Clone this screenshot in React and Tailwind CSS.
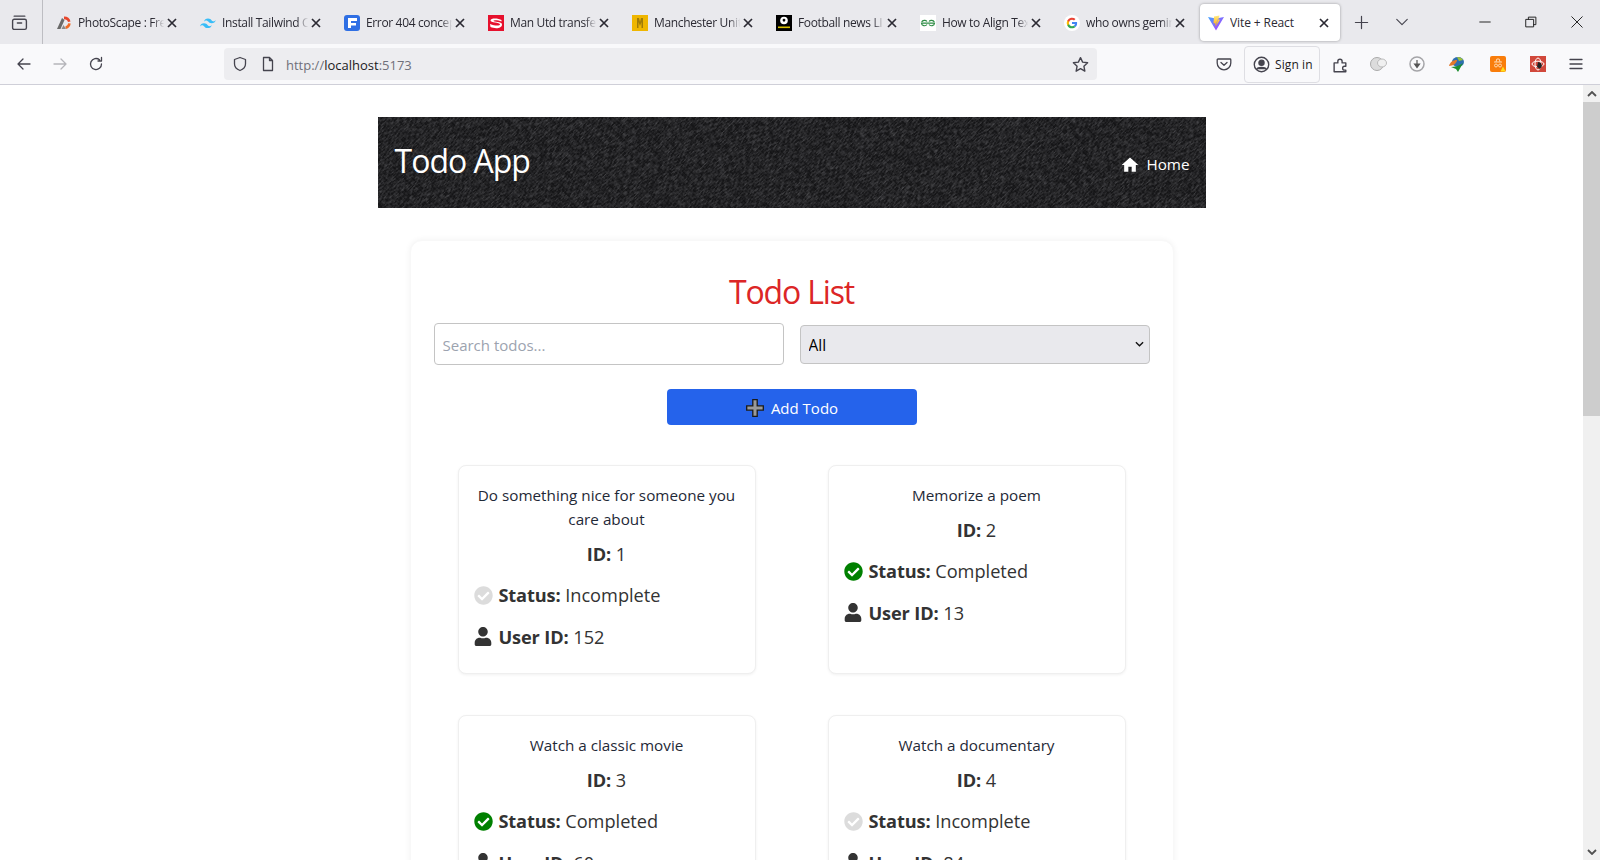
import React from "react";
import { FaCheckCircle, FaUser } from "react-icons/fa";
import { MdHome } from "react-icons/md";

const sans = "font-['Open_Sans','Noto_Sans',sans-serif]";

const Photo = () => (
  <svg viewBox="0 0 16 16" className="w-4 h-4 shrink-0"><path d="M1 14 L6 3 L8.500 5 L4.500 14Z" fill="#6a6a6a"/><path d="M8 1.500a6.500 6.500 0 0 1 6.500 5l-2.500.5A4 4 0 0 0 8 4.200Z" fill="#e8452c"/><path d="M14.700 8.500a6.500 6.500 0 0 1-4.700 5.500l-.8-2.300a4 4 0 0 0 3-3.400Z" fill="#f06a24"/><path d="M5.500 14l2-4 2.500 4Z" fill="#8a8a8a"/></svg>
);
const TailwindIcon = () => (
  <svg viewBox="0 0 16 16" className="w-4 h-4 shrink-0"><path fill="#38bdf8" d="M8 3.500c-2.100 0-3.500 1.100-4 3.200.8-1.100 1.700-1.500 2.700-1.200.6.200 1 .6 1.500 1.100.7.800 1.600 1.700 3.500 1.700 2.100 0 3.500-1.100 4-3.200-.8 1.100-1.700 1.500-2.700 1.200-.6-.2-1-.6-1.500-1.100C10.800 4.400 9.900 3.500 8 3.500ZM4 8.300c-2.100 0-3.500 1.100-4 3.200.8-1.100 1.700-1.500 2.700-1.200.6.200 1 .6 1.500 1.100.7.800 1.600 1.700 3.500 1.700 2.100 0 3.500-1.100 4-3.200-.8 1.100-1.700 1.500-2.700 1.200-.6-.2-1-.6-1.500-1.100C6.800 9.200 5.900 8.300 4 8.300Z"/></svg>
);
const Formspree = () => (
  <svg viewBox="0 0 16 16" className="w-4 h-4 shrink-0"><rect width="16" height="16" rx="3" fill="#2f6fe4"/><path d="M4 3h9v3H7v2h5v2.500H7V13H4Z" fill="#fff"/></svg>
);
const SIcon = () => (
  <svg viewBox="0 0 16 16" className="w-4 h-4 shrink-0"><rect width="16" height="16" fill="#e6102d"/><path d="M13.500 5C11 3.500 2.800 2.500 2.500 5.500 2.300 8 12 7 12 9.500c0 1.500-5 1.500-10-.5l.5 3c4 1.800 11.500 2 11.500-2.500C14 6 5.500 7.500 5.500 5.800c0-1 5-.8 8 .7Z" fill="#fff"/></svg>
);
const ManU = () => (
  <svg viewBox="0 0 16 16" className="w-4 h-4 shrink-0"><rect width="16" height="16" fill="#efb600"/><path d="M5 3h2l1 4 1-4h2v10H9.500V7L8 11 6.500 7v6H5Z" fill="#a07c08"/></svg>
);
const Football = () => (
  <svg viewBox="0 0 16 16" className="w-4 h-4 shrink-0"><rect width="16" height="16" fill="#000"/><circle cx="8" cy="5.500" r="3.800" fill="#fff"/><path d="M8 3.500l1.500 1.200-.6 1.800H7.100l-.6-1.800Z" fill="#000"/><rect x="2" y="11.500" width="12" height="1.600" fill="#d9c100"/></svg>
);
const Gfg = () => (
  <svg viewBox="0 0 16 16" className="w-4 h-4 shrink-0"><rect width="16" height="16" fill="#fff"/><g fill="none" stroke="#2f8d46" strokeWidth="1.200"><path d="M8 8.200H1.500a3 2.700 0 0 0 5.500 1.300M8 8.200h6.500a3 2.700 0 0 1-5.500 1.300"/><path d="M7 6.500A3 2.700 0 0 0 1.700 7M9 6.500A3 2.700 0 0 1 14.300 7"/></g></svg>
);
const Google = () => (
  <svg viewBox="0 0 16 16" className="w-4 h-4 shrink-0"><circle cx="8" cy="8" r="8" fill="#fff"/><path d="M13.100 8.200c0-.4 0-.7-.1-1.100H8v2h2.900a2.500 2.500 0 0 1-1.100 1.600l1.700 1.300c1-.9 1.600-2.200 1.600-3.800Z" fill="#4285f4"/><path d="M8 13.300c1.400 0 2.600-.5 3.500-1.300l-1.700-1.300c-.5.300-1.100.5-1.800.5-1.400 0-2.500-.9-2.900-2.200H3.300v1.400A5.300 5.300 0 0 0 8 13.300Z" fill="#34a853"/><path d="M5.100 9a3.200 3.200 0 0 1 0-2V5.600H3.300a5.300 5.300 0 0 0 0 4.800Z" fill="#fbbc05"/><path d="M8 4.800c.8 0 1.500.3 2 .8l1.500-1.500A5.300 5.300 0 0 0 3.300 5.600L5.100 7C5.500 5.700 6.600 4.800 8 4.800Z" fill="#ea4335"/></svg>
);
const Vite = () => (
  <svg viewBox="0 0 16 16" className="w-4 h-4 shrink-0"><defs><linearGradient id="va" x1="0" y1="0" x2="1" y2="1"><stop offset="0" stopColor="#41a5ff"/><stop offset="1" stopColor="#bd34fe"/></linearGradient><linearGradient id="vb" x1="0" y1="0" x2="0" y2="1"><stop offset="0" stopColor="#ffea83"/><stop offset="1" stopColor="#ffa800"/></linearGradient></defs><path d="M0 2l8 1.500L16 2 8 15.500Z" fill="url(#va)"/><path d="M11.500 .5L6 1.500l-.5 7 1.800-.4-.5 3.300Z M11.500 .5l-1 4.500 1.700-.4-4.900 7.500" fill="url(#vb)"/></svg>
);

const X = () => (
  <svg viewBox="0 0 10 10" className="w-[10px] h-[10px]"><path d="M1 1l8 8M9 1l-8 8" stroke="#2b2a33" strokeWidth="1.700" fill="none"/></svg>
);

const tabs = [
  [Photo, "PhotoScape : Fre"],
  [TailwindIcon, "Install Tailwind C"],
  [Formspree, "Error 404 concep"],
  [SIcon, "Man Utd transfe"],
  [ManU, "Manchester Unit"],
  [Football, "Football news LI"],
  [Gfg, "How to Align Tex"],
  [Google, "who owns gemin"],
];

const Tab = ({ Icon, label, active }) => (
  <div className="w-[144px] h-[44px] shrink-0 px-[2px] pt-[4px] pb-[3px]">
    <div className={`h-[37px] rounded-[4px] flex items-center pl-[8px] pr-[11px] ${active ? "bg-white shadow-[0_0_3px_rgba(0,0,0,0.35)]" : ""}`}>
      <Icon />
      <div className={`ml-[6px] w-[88px] pt-[1px] overflow-hidden whitespace-nowrap text-[12px] text-[#2b2a33] ${active ? "tracking-[-0.1px]" : "tracking-[-0.35px] [mask-image:linear-gradient(to_right,black_85%,transparent_98%)]"}`}>{label}</div>
      <div className="ml-auto flex"><X /></div>
    </div>
  </div>
);

const I = ({ children, cls = "w-4 h-4", stroke = "#45444e" }) => (
  <svg viewBox="0 0 16 16" className={cls} fill="none" stroke={stroke} strokeWidth="1.300" strokeLinecap="round" strokeLinejoin="round">{children}</svg>
);

const Slot = ({ w, children }) => (
  <div className={`flex items-center justify-center shrink-0 ${w}`}>{children}</div>
);

const todos = [
  { title: "Do something nice for someone you care about", id: 1, done: false, user: 152 },
  { title: "Memorize a poem", id: 2, done: true, user: 13 },
  { title: "Watch a classic movie", id: 3, done: true, user: 60 },
  { title: "Watch a documentary", id: 4, done: false, user: 84 },
];

const Card = ({ t }) => (
  <div className="h-[209px] rounded-[8px] border border-[#efefef] bg-white shadow-[0_1px_3px_rgba(0,0,0,0.06)] pt-[17px] px-[15px] text-[#333]">
    <p className="text-center text-[15.250px] leading-[24px] text-[#1f2937]">{t.title}</p>
    <p className="mt-[11px] text-center text-[18.200px] leading-[24px]"><b className="font-bold tracking-[-0.15px]">ID:</b> {t.id}</p>
    <div className="mt-[17px] flex items-center gap-[6px] text-[18.200px] leading-[25px]">
      <FaCheckCircle className={`w-[19px] h-[19px] shrink-0 ${t.done ? "text-[#008000]" : "text-[#dcdcdc]"}`} />
      <span><b className="font-bold tracking-[-0.15px]">Status:</b> {t.done ? "Completed" : "Incomplete"}</span>
    </div>
    <div className="mt-[17px] flex items-center gap-[7px] text-[18.200px] leading-[25px]">
      <FaUser className="w-[18px] h-[19px] shrink-0 text-[#333] -mt-[2px]" />
      <span><b className="font-bold tracking-[-0.15px]">User ID:</b> {t.user}</span>
    </div>
  </div>
);

export default function App() {
  return (
    <div className={`h-[860px] w-[1600px] overflow-hidden flex flex-col bg-white ${sans}`}>
      {/* tab strip */}
      <div className="h-[44px] shrink-0 bg-[#e9e9ed] flex">
        <div className="w-[43px] shrink-0 border-r border-[#bdbdc2] flex items-center justify-center pr-[3px]">
          <I cls="w-[17px] h-[17px]"><rect x="1.500" y="5" width="13" height="9.500" rx="1.500"/><path d="M3 2h10M6 8.500h4"/></I>
        </div>
        <div className="w-[3px] shrink-0" />
        {tabs.map(([Icon, label]) => <Tab key={label} Icon={Icon} label={label} />)}
        <Tab Icon={Vite} label="Vite + React" active />
        <Slot w="w-[38px]"><I cls="w-[15px] h-[15px]"><path d="M8 1.500v13M1.500 8h13"/></I></Slot>
        <Slot w="w-[43px]"><I cls="w-[14px] h-[14px]"><path d="M2 5l6 6 6-6"/></I></Slot>
        <div className="ml-auto flex">
          <Slot w="w-[46px]"><I cls="w-[12px] h-[12px]" stroke="#222"><path d="M1 8h14"/></I></Slot>
          <Slot w="w-[46px]"><I cls="w-[12px] h-[12px]" stroke="#222"><rect x="1.500" y="4.500" width="10" height="10"/><path d="M4.500 4.500v-3h10v10h-3"/></I></Slot>
          <Slot w="w-[46px]"><I cls="w-[12px] h-[12px]" stroke="#222"><path d="M1 1l14 14M15 1L1 15"/></I></Slot>
        </div>
      </div>
      {/* toolbar */}
      <div className="h-[41px] shrink-0 bg-[#f9f9fb] border-b border-[#cfcfd8] flex items-center pl-[6px]">
        <Slot w="w-[36px]"><I><path d="M14 8H2.500M7 3L2 8l5 5"/></I></Slot>
        <Slot w="w-[36px]"><I stroke="#b5b5ba"><path d="M2 8h11.500M9 3l5 5-5 5"/></I></Slot>
        <Slot w="w-[36px]"><I><path d="M13.500 8A5.500 5.500 0 1 1 11.500 3.800M13.500 1.500V5H10"/></I></Slot>
        <div className="ml-[110px] w-[873px] h-[32px] rounded-[4px] bg-[#ededf0] flex items-center pl-[8px] pr-[8px]">
          <I><path d="M8 1.500l5.500 2v4.500c0 3.500-2.800 5.500-5.500 6.500C5.300 13.500 2.500 11.500 2.500 8V3.500Z"/></I>
          <div className="ml-[12px]"><I><path d="M3.500 1.500h6l3 3v10h-9ZM9.500 1.500v3h3"/></I></div>
          <span className="ml-[10px] pt-[3px] text-[13px] text-[#70707a]">http://<span className="text-[#1c1b22]">localhost</span>:5173</span>
          <div className="ml-auto"><I cls="w-[17px] h-[17px]"><path d="M8 1.500l2 4.300 4.700.6-3.500 3.200.9 4.700L8 11.900 3.900 14.300l.9-4.700L1.300 6.400 6 5.800Z"/></I></div>
        </div>
        <div className="ml-[119px] w-[16px]"><I><path d="M2 3h12a.8.8 0 0 1 .8.8V7A6.800 6.800 0 0 1 1.200 7V3.800A.8.8 0 0 1 2 3ZM5 6.500l3 2.700 3-2.700"/></I></div>
        <div className="ml-[12px] w-[76px] h-[37px] rounded-[4px] border border-[#dedee3] flex items-center pl-[8px] gap-[5px]">
          <I cls="w-[17px] h-[17px]" ><circle cx="8" cy="8" r="6.800"/><circle cx="8" cy="6.300" r="2.400" fill="#45444e"/><path d="M3.500 12.500c1-2.200 8-2.200 9 0" fill="#45444e"/></I>
          <span className="pt-[1px] text-[12px] tracking-[0.1px] text-[#1c1b22] whitespace-nowrap">Sign in</span>
        </div>
        <div className="ml-[12px]"><I cls="w-[17px] h-[17px]"><path d="M2 6.500h3.500V5a2 2 0 0 1 4 0v1.500H13v3.200h-1.200a1.800 1.800 0 0 0 0 3.600H13v1.500H2Z"/></I></div>
        <div className="ml-[21px]"><svg viewBox="0 0 18 16" className="w-[18px] h-[16px]"><circle cx="7" cy="8" r="6.500" fill="#dcdcdc" stroke="#aaa" strokeWidth="1"/><ellipse cx="12" cy="7" rx="4.500" ry="4" fill="#f0f0f0" stroke="#bbb" strokeWidth="1"/></svg></div>
        <div className="ml-[21px]"><svg viewBox="0 0 16 16" className="w-4 h-4"><circle cx="8" cy="8" r="7" fill="none" stroke="#a5a5a8" strokeWidth="1.500"/><path d="M8 4v6M5.500 8L8 11.500 10.500 8Z" fill="#555" stroke="#555" strokeWidth="1.200"/></svg></div>
        <div className="ml-[23px]"><svg viewBox="0 0 18 16" className="w-[18px] h-[16px]"><ellipse cx="10" cy="6" rx="6" ry="5" fill="#2e6fb0"/><path d="M1 10c1-4 4-6 8-6 0 3-4 6-8 6Z" fill="#e2792b"/><path d="M9 1c3 0 5 1 6 3l-4 1Z" fill="#9fc23a"/><path d="M3 11c3 0 8-1 12-4l-5 9-2-3Z" fill="#1d8f2e"/></svg></div>
        <div className="ml-[24px]"><svg viewBox="0 0 16 16" className="w-4 h-4"><rect width="16" height="16" rx="2" fill="#f97d0b"/><path d="M4 6h8M6 6l.8-3h2.400l.8 3" stroke="#ffd9b0" strokeWidth="1" fill="none"/><circle cx="6" cy="9.500" r="1.500" fill="none" stroke="#ffd9b0"/><circle cx="10" cy="9.500" r="1.500" fill="none" stroke="#ffd9b0"/><path d="M10.500 15.500l2.500-5 2.500 5Z" fill="#ffe11a"/></svg></div>
        <div className="ml-[24px]"><svg viewBox="0 0 16 16" className="w-4 h-4"><rect width="16" height="16" fill="#d1483b"/><ellipse cx="8" cy="8" rx="6" ry="2.800" fill="none" stroke="#fff" strokeWidth="1"/><ellipse cx="8" cy="8" rx="3" ry="6" fill="none" stroke="#fff" strokeWidth="1"/><path d="M8 6l3 1 1 3-2 3-3-2Z" fill="#222"/></svg></div>
        <div className="ml-[22px]"><I><path d="M2 3.500h12M2 8h12M2 12.500h12"/></I></div>
      </div>
      {/* page */}
      <div className="flex-1 min-h-0 flex">
        <div className="flex-1 min-w-0 overflow-hidden">
          <div className="w-[828px] mx-auto mt-[32px]">
            <header className="relative h-[91px] overflow-hidden bg-[#131315] flex items-center justify-between pl-[17px] pr-[16px]">
              <svg className="absolute inset-0 w-full h-full" aria-hidden="true">
                <filter id="noise" x="0" y="0" width="100%" height="100%"><feTurbulence type="fractalNoise" baseFrequency="1.300 0.220" numOctaves="2" seed="11"/><feColorMatrix values="0 0 0 0 0.3  0 0 0 0 0.3  0 0 0 0 0.32  0.8 0 0 0 -0.3"/></filter>
                <pattern id="weave" width="2.800" height="2.800" patternUnits="userSpaceOnUse" patternTransform="rotate(45)"><rect width="2.800" height="1.400" fill="#fff" fillOpacity="0.035"/></pattern>
                <rect x="-500" y="-1000" width="2200" height="2200" filter="url(#noise)" transform="rotate(45)"/>
                <rect width="100%" height="100%" fill="url(#weave)"/>
              </svg>
              <h1 className="relative text-[32px] leading-[44px] text-white font-normal tracking-[-1px] -mt-[4px]">Todo App</h1>
              <a className="relative flex items-center gap-[6px] text-white text-[15.250px] mt-[4px]"><MdHome className="w-[20px] h-[20px]" />Home</a>
            </header>
            <main className="mt-[32px] mx-[32px] rounded-[12px] bg-white border border-[#f8f8f8] shadow-[0_0_6px_rgba(0,0,0,0.06)] px-[23px] pt-[29px] pb-[40px]">
              <h2 className="text-center text-[32px] leading-[44px] text-[#dc2626] font-normal tracking-[-1.150px]">Todo List</h2>
              <div className="mt-[9px] flex items-center gap-[16px]">
                <input readOnly placeholder="Search todos..." className="w-[350px] h-[42px] rounded-[4px] border border-[#c4c4c4] bg-white px-[8px] pt-[2px] text-[15px] outline-none placeholder:text-[#9ca3af]" />
                <div className="relative w-[350px] h-[39px]">
                  <select className="w-full h-full appearance-none rounded-[4px] border border-[#c4c4c4] bg-[#e9e9ed] px-[8px] pt-[3px] text-[15.500px] text-black outline-none"><option>All</option></select>
                  <svg viewBox="0 0 10 6" className="absolute right-[6px] top-[16px] w-[9px] h-[6px] pointer-events-none"><path d="M1 1l4 4 4-4" fill="none" stroke="#111" strokeWidth="1.500"/></svg>
                </div>
              </div>
              <div className="mt-[24px] flex justify-center">
                <button className="relative w-[250px] h-[36px] rounded-[4px] bg-[#2563eb] text-white text-[15px] flex items-center justify-center pl-[26px] pt-[2px]">
                  Add Todo
                  <svg viewBox="0 0 18 18" className="absolute left-[79px] top-[10px] w-[18px] h-[18px]"><path d="M6.800.7h4.400v6.100h6.100v4.400h-6.100v6.100H6.800v-6.100H.7V6.800h6.100Z" fill="#9a9a9a" stroke="#1a1a1a" strokeWidth="1.300"/></svg>
                </button>
              </div>
              <div className="mt-[40px] mx-[24px] grid grid-cols-2 gap-x-[72px] gap-y-[41px]">
                {todos.map((t) => <Card key={t.id} t={t} />)}
              </div>
            </main>
          </div>
        </div>
        <div className="w-[17px] shrink-0 bg-[#f0f0f0] flex flex-col items-center">
          <div className="h-[17px] flex items-center"><svg viewBox="0 0 10 6" className="w-[10px] h-[6px]"><path d="M1 5l4-4 4 4" fill="none" stroke="#505050" strokeWidth="1.800"/></svg></div>
          <div className="w-full h-[314px] bg-[#cdcdcd]" />
          <div className="mt-auto h-[17px] flex items-center"><svg viewBox="0 0 10 6" className="w-[10px] h-[6px]"><path d="M1 1l4 4 4-4" fill="none" stroke="#505050" strokeWidth="1.800"/></svg></div>
        </div>
      </div>
    </div>
  );
}
